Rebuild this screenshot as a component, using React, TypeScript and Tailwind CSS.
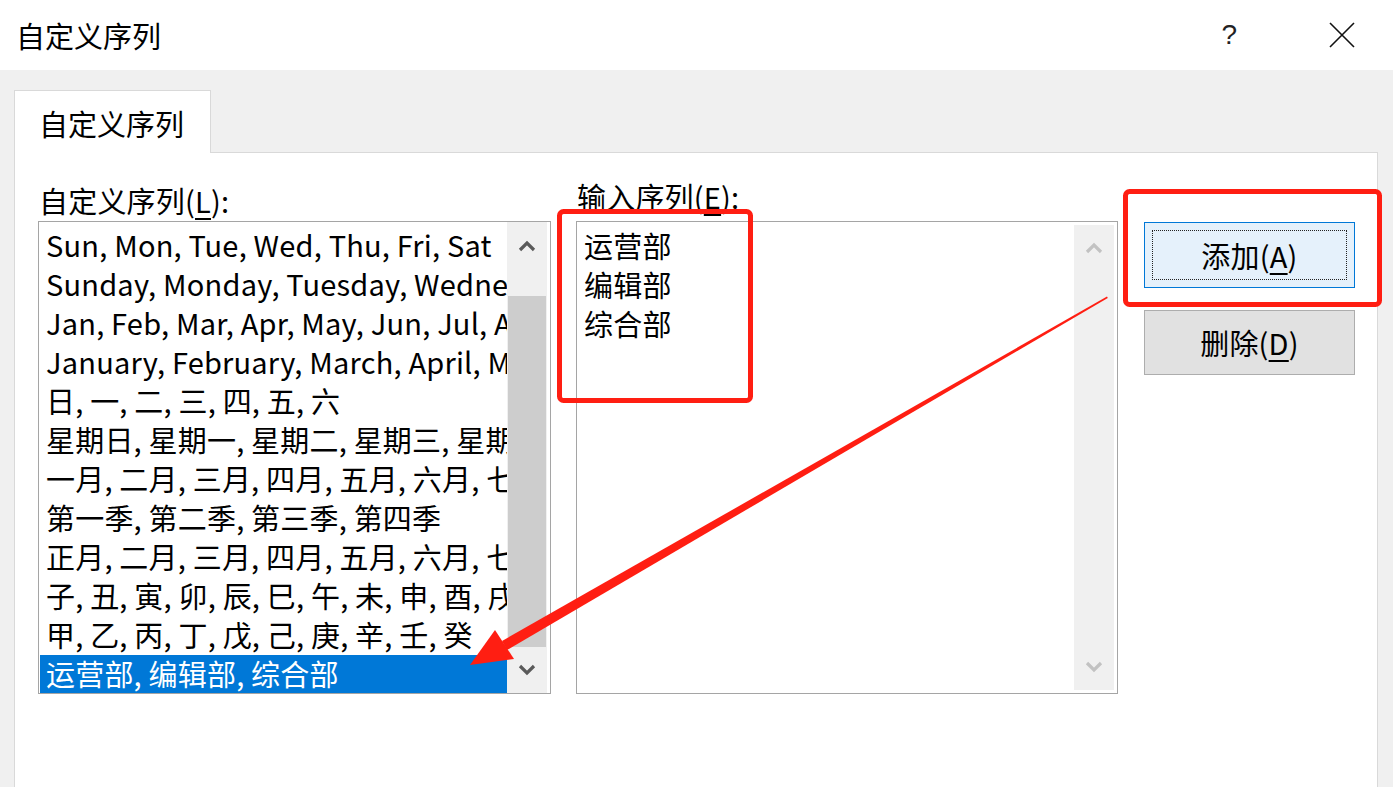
import React from "react";

const font = { fontFamily: '"Noto Sans CJK SC", "Noto Sans", sans-serif' };

const listItems = [
  "Sun, Mon, Tue, Wed, Thu, Fri, Sat",
  "Sunday, Monday, Tuesday, Wednesday, Thursday, Friday, Saturday",
  "Jan, Feb, Mar, Apr, May, Jun, Jul, Aug, Sep, Oct, Nov, Dec",
  "January, February, March, April, May, June, July, August",
  "日, 一, 二, 三, 四, 五, 六",
  "星期日, 星期一, 星期二, 星期三, 星期四, 星期五, 星期六",
  "一月, 二月, 三月, 四月, 五月, 六月, 七月, 八月",
  "第一季, 第二季, 第三季, 第四季",
  "正月, 二月, 三月, 四月, 五月, 六月, 七月, 八月",
  "子, 丑, 寅, 卯, 辰, 巳, 午, 未, 申, 酉, 戌, 亥",
  "甲, 乙, 丙, 丁, 戊, 己, 庚, 辛, 壬, 癸",
  "运营部, 编辑部, 综合部",
];

function Chevron({ up, color }: { up: boolean; color: string }) {
  return (
    <svg width="18" height="12" viewBox="0 0 18 12">
      <path
        d={up ? "M2 10 L9 3 L16 10" : "M2 2 L9 9 L16 2"}
        fill="none"
        stroke={color}
        strokeWidth="3.2"
      />
    </svg>
  );
}

export default function App() {
  return (
    <div
      className="relative w-[1393px] h-[787px] overflow-hidden bg-white text-[#000] flex flex-col"
      style={font}
    >
      {/* Title bar */}
      <div className="h-[70px] shrink-0 flex items-center pl-[16px] pr-[38px]">
        <span className="text-[29px] leading-none">自定义序列</span>
        <div className="ml-auto flex items-center gap-[92px]">
          <span className="text-[28px] leading-none text-[#222]" style={{ fontFamily: '"Liberation Sans", sans-serif' }}>?</span>
          <svg width="26" height="26" viewBox="0 0 26 26">
            <path d="M1 1 L25 25 M25 1 L1 25" stroke="#111" strokeWidth="1.6" />
          </svg>
        </div>
      </div>

      {/* Body */}
      <div className="flex-1 bg-[#f0f0f0] pl-[14px] pr-[15px] pt-[20px] flex flex-col">
        {/* Tabs */}
        <div className="flex h-[63px] shrink-0">
          <div className="w-[197px] bg-white border border-b-0 border-[#d9d9d9] flex items-center pl-[24px] pt-[2px]">
            <span className="text-[29px] leading-none">自定义序列</span>
          </div>
          <div className="flex-1 border-b border-[#d9d9d9]" />
        </div>

        {/* Panel */}
        <div className="flex-1 bg-white border-x border-[#d9d9d9] pl-[23px] pt-[28px] flex gap-[25px] tracking-[0.2px]">
          {/* Left column */}
          <div className="w-[513px] flex flex-col">
            <div className="text-[29px] leading-[39px] h-[40px] pl-[1px]">
              自定义序列(<span className="underline underline-offset-[5px] decoration-[1.5px]">L</span>):
            </div>
            <div className="h-[473px] border border-[#a5a5a5] flex overflow-hidden">
              <div className="flex-1 pt-[4px] pl-[1px] overflow-hidden">
                {listItems.map((t, i) => {
                  const sel = i === listItems.length - 1;
                  return (
                    <div
                      key={i}
                      className={
                        "h-[39px] leading-[37px] text-[29px] whitespace-nowrap pl-[6px] " +
                        (sel ? "bg-[#0078d7] text-white" : "")
                      }
                    >
                      {t}
                    </div>
                  );
                })}
              </div>
              <div className="w-[40px] mr-[3px] flex flex-col bg-[#f0f0f0]">
                <div className="h-[74px] flex items-start justify-center pt-[18px]">
                  <Chevron up color="#5a5a5a" />
                </div>
                <div className="mx-[1px] h-[351px] bg-[#cdcdcd]" />
                <div className="flex-1 flex items-center justify-center">
                  <Chevron up={false} color="#5a5a5a" />
                </div>
              </div>
            </div>
          </div>

          {/* Middle column */}
          <div className="w-[542px] flex flex-col">
            <div className="text-[29px] leading-[39px] h-[44px] pl-[1px] -mt-[4px]">
              输入序列(<span className="underline underline-offset-[5px] decoration-[1.5px]">E</span>):
            </div>
            <div className="h-[473px] border border-[#a5a5a5] flex">
              <div className="flex-1 pt-[4px] pl-[7px] text-[29px] leading-[39px]">
                <div>运营部</div>
                <div>编辑部</div>
                <div>综合部</div>
              </div>
              <div className="w-[40px] my-[3px] mr-[3px] flex flex-col justify-between bg-[#f0f0f0]">
                <div className="h-[46px] flex items-center justify-center">
                  <Chevron up color="#c2c2c2" />
                </div>
                <div className="h-[46px] flex items-center justify-center">
                  <Chevron up={false} color="#c2c2c2" />
                </div>
              </div>
            </div>
          </div>

          {/* Buttons */}
          <div className="w-[211px] flex flex-col gap-[22px] pt-[41px] ml-[1px]">
            <div className="h-[66px] bg-[#e5f1fb] border border-[#0078d7] p-[7px]">
              <div className="h-full border border-dotted border-[#222] flex items-center justify-center">
                <span className="text-[29px] leading-none">
                  添加(<span className="underline underline-offset-[5px] decoration-[1.5px]">A</span>)
                </span>
              </div>
            </div>
            <div className="h-[65px] bg-[#e1e1e1] border border-[#adadad] flex items-center justify-center">
              <span className="text-[29px] leading-none">
                删除(<span className="underline underline-offset-[5px] decoration-[1.5px]">D</span>)
              </span>
            </div>
          </div>
        </div>
      </div>

      {/* Annotation overlay */}
      <svg
        className="absolute inset-0 pointer-events-none"
        width="1393"
        height="787"
        viewBox="0 0 1393 787"
      >
        <rect x="559.5" y="211.5" width="191" height="189" rx="4" fill="none" stroke="#ff1e12" strokeWidth="5" />
        <rect x="1125.5" y="191.5" width="254" height="113" rx="4" fill="none" stroke="#ff1e12" strokeWidth="5" />
        <polygon
          points="1107,296.5 1107.8,298 507,650 502,641"
          fill="#ff1e12"
        />
        <polygon points="470,665 495,630 514,659" fill="#ff1e12" />
      </svg>
    </div>
  );
}
